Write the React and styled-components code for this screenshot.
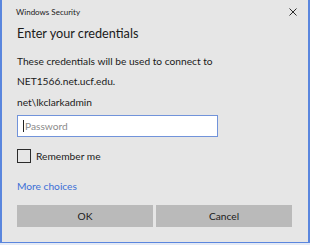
import React from "react";
import styled, { createGlobalStyle } from "styled-components";

const Global = createGlobalStyle`
  html, body {
    margin: 0;
    padding: 0;
    background: #e4eaf6;
  }
  body {
    width: 310px;
    height: 245px;
    overflow: hidden;
    font-family: Lato, "Noto Sans", sans-serif;
  }
`;

export default function App() {
  return (
    <>
      <Global />
      <Dialog>
        <TitleBar>
          <span>Windows Security</span>
          <Close>
            <svg width="8" height="8" viewBox="0 0 8 8">
              <path d="M0.5 0.5 L7.5 7.5 M7.5 0.5 L0.5 7.5" stroke="#2b2b2b" strokeWidth="1" />
            </svg>
          </Close>
        </TitleBar>
        <Content>
          <Heading>Enter your credentials</Heading>
          <Message>
            These credentials will be used to connect to
            <br />
            NET1566.net.ucf.edu.
          </Message>
          <User>net\lkclarkadmin</User>
          <PasswordBox>
            <Caret />
            <span>Password</span>
          </PasswordBox>
          <CheckRow>
            <Box />
            <span>Remember me</span>
          </CheckRow>
          <MoreLink>More choices</MoreLink>
          <Buttons>
            <Button>OK</Button>
            <Button>Cancel</Button>
          </Buttons>
        </Content>
      </Dialog>
    </>
  );
}

const Dialog = styled.div`
  box-sizing: border-box;
  width: 310px;
  height: 243px;
  background: #e6e6e6;
  border-left: 2px solid #5a86de;
  border-right: 2px solid #5a86de;
  border-bottom: 1px solid #5a86de;
  display: flex;
  flex-direction: column;
`;

const TitleBar = styled.div`
  display: flex;
  align-items: center;
  justify-content: space-between;
  height: 24px;
  padding: 0 11px 0 14px;
  font-size: 8px;
  color: #1a1a1a;
`;

const Close = styled.div`
  display: flex;
  align-items: center;
`;

const Content = styled.div`
  display: flex;
  flex-direction: column;
  padding: 0 15px;
  color: #1a1a1a;
`;

const Heading = styled.div`
  font-size: 12.7px;
  line-height: 18px;
`;

const Message = styled.div`
  font-size: 10.2px;
  line-height: 20px;
  margin-top: 9px;
`;

const User = styled.div`
  font-size: 10.2px;
  line-height: 16px;
  margin-top: 3px;
`;

const PasswordBox = styled.div`
  box-sizing: border-box;
  width: 201px;
  height: 22px;
  margin-top: 5px;
  background: #fff;
  border: 1px solid #7193da;
  display: flex;
  align-items: center;
  padding-left: 5px;
  font-size: 10.2px;
  color: #8c8c8c;
`;

const Caret = styled.div`
  width: 1px;
  height: 12px;
  background: #222;
  margin-right: 1px;
`;

const CheckRow = styled.div`
  display: flex;
  align-items: center;
  gap: 5px;
  margin-top: 12px;
  height: 14px;
  font-size: 10.2px;
`;

const Box = styled.div`
  box-sizing: border-box;
  width: 14px;
  height: 14px;
  border: 1px solid #2b2b2b;
  background: #e6e6e6;
`;

const MoreLink = styled.div`
  font-size: 10.2px;
  line-height: 16px;
  color: #3d6fd6;
  margin-top: 15px;
`;

const Buttons = styled.div`
  display: grid;
  grid-template-columns: 136px 136px;
  gap: 3px;
  margin-top: 11px;
`;

const Button = styled.div`
  height: 22px;
  background: #bababa;
  display: flex;
  align-items: center;
  justify-content: center;
  font-size: 10.2px;
  color: #1a1a1a;
`;
